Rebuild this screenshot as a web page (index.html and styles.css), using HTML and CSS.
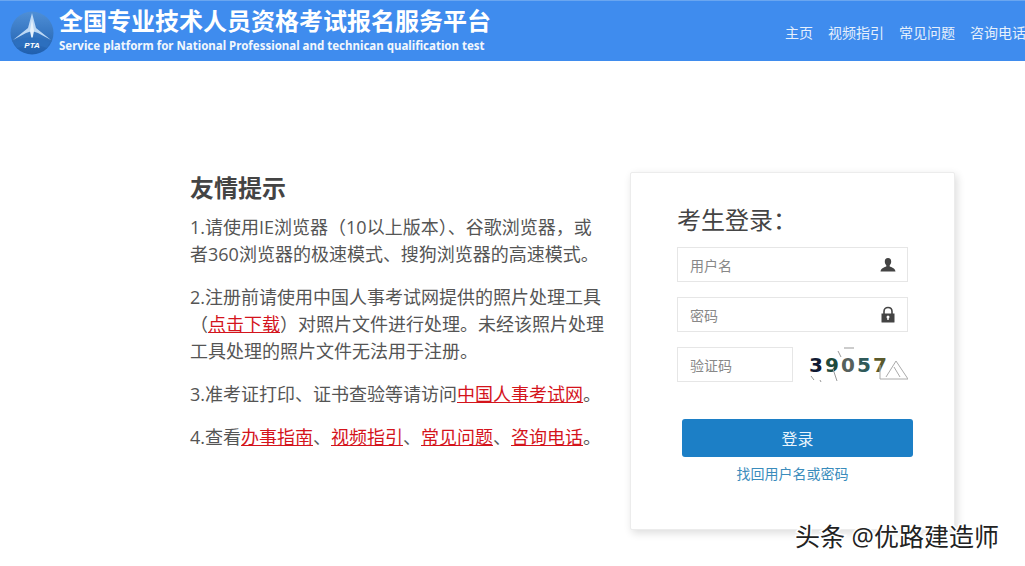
FILE: index.html
```html
<!DOCTYPE html>
<html lang="zh-CN">
<head>
<meta charset="utf-8">
<title>全国专业技术人员资格考试报名服务平台</title>
<link rel="stylesheet" href="styles.css">
</head>
<body>
<header class="topbar">
  <div class="brand">
    <svg class="logo" width="44" height="44" viewBox="0 0 44 44" aria-hidden="true">
      <defs>
        <linearGradient id="lg" x1="0" y1="0" x2="0" y2="1">
          <stop offset="0" stop-color="#4f8fd6"/>
          <stop offset="1" stop-color="#1f5fae"/>
        </linearGradient>
      </defs>
      <circle cx="22" cy="22" r="21.5" fill="url(#lg)"/>
      <path d="M22 2 L26 17 L41 29 L28 22 L22 20 L16 22 L3 29 L18 17 Z" fill="#bcd8f5"/>
      <path d="M22 8 L24 20 L22 30 L20 20 Z" fill="#e6f1fc"/>
      <path d="M4 31 Q22 22 40 31 L37 37 Q22 30 7 37 Z" fill="#2c6fbe"/>
      <text x="22" y="37" class="logo-text">PTA</text>
    </svg>
    <div class="brand-text">
      <div class="brand-cn">全国专业技术人员资格考试报名服务平台</div>
      <div class="brand-en">Service platform for National Professional and technican qualification test</div>
    </div>
  </div>
  <nav class="nav">
    <a>主页</a><a>视频指引</a><a>常见问题</a><a>咨询电话</a>
  </nav>
</header>
<main class="main">
  <section class="tips">
    <h2 class="tips-title">友情提示</h2>
    <p>1.请使用IE浏览器（10以上版本）、谷歌浏览器，或者360浏览器的极速模式、搜狗浏览器的高速模式。</p>
    <p>2.注册前请使用中国人事考试网提供的照片处理工具（<a class="red">点击下载</a>）对照片文件进行处理。未经该照片处理工具处理的照片文件无法用于注册。</p>
    <p>3.准考证打印、证书查验等请访问<a class="red">中国人事考试网</a>。</p>
    <p>4.查看<a class="red">办事指南</a>、<a class="red">视频指引</a>、<a class="red">常见问题</a>、<a class="red">咨询电话</a>。</p>
  </section>
  <section class="panel">
    <h3 class="panel-title">考生登录：</h3>
    <div class="field">
      <span class="ph">用户名</span>
      <svg width="16" height="16" viewBox="0 0 16 16" aria-hidden="true"><path d="M8 1c2.2 0 3.2 1.500 3.200 3.500 0 1.600-.7 3-1.500 3.800v1.300c1.600.7 5.300 1.500 5.800 4.900H.5c.5-3.400 4.200-4.200 5.800-4.900V8.300C5.500 7.500 4.800 6.100 4.800 4.500 4.800 2.500 5.800 1 8 1z" fill="#444"/></svg>
    </div>
    <div class="field">
      <span class="ph">密码</span>
      <svg width="16" height="17" viewBox="0 0 16 17" aria-hidden="true"><path d="M4 8V5.500C4 3 5.700 1.500 8 1.500S12 3 12 5.500V8" fill="none" stroke="#444" stroke-width="1.600"/><path d="M1.500 7.500h13v8.500a.5.5 0 0 1-.5.5H2a.5.500 0 0 1-.5-.5z" fill="#444"/><circle cx="8" cy="11" r="1.500" fill="#fff"/><rect x="7.300" y="11" width="1.400" height="3" fill="#fff"/></svg>
    </div>
    <div class="captcha-row">
      <div class="field field-short"><span class="ph">验证码</span></div>
      <div class="captcha">
        <span class="c1">3</span><span class="c2">9</span><span class="c3">0</span><span class="c4">5</span><span class="c5">7</span>
        <svg class="noise" width="100" height="36" viewBox="0 0 100 36" aria-hidden="true">
          <path d="M72 32 V18 M72 32 H100 L88 14 L78 30 M86 20 L92 30" fill="none" stroke="#aaa" stroke-width="1"/>
          <path d="M25 22 L29 34 M3 29 L6 33 M12 33 L13 35 M36 1 H46 M30 4 L33 10" fill="none" stroke="#999" stroke-width="1"/>
        </svg>
      </div>
    </div>
    <button class="login" type="button">登录</button>
    <a class="forgot">找回用户名或密码</a>
  </section>
</main>
<div class="watermark">头条 @优路建造师</div>
</body>
</html>
```
FILE: styles.css
```css
* { box-sizing: border-box; }
html, body { margin: 0; padding: 0; }
body {
  width: 1025px;
  height: 566px;
  overflow: hidden;
  position: relative;
  background: #fff;
  color: #555;
  font-family: "Open Sans", "Noto Sans CJK SC", sans-serif;
}
.topbar {
  height: 61px;
  background: #3f8cee;
  border-top: 1px solid #6aa6f0;
  display: flex;
  justify-content: space-between;
  align-items: center;
  white-space: nowrap;
}
.brand { display: flex; align-items: center; padding-left: 10px; gap: 5px; }
.logo { flex: none; margin-top: 4px; }
.logo-text { font: italic bold 8px "Liberation Sans", sans-serif; fill: #fff; text-anchor: middle; }
.brand-text { margin-top: -5px; }
.brand-cn { font-size: 24px; line-height: 32px; font-weight: 700; color: #fff; }
.brand-en { font: 700 11.5px/14px "Noto Sans", sans-serif; color: #f2f7fd; margin-top: 2px; }
.nav { display: flex; gap: 15px; margin-right: -15px; font-size: 14px; color: #e6f0fc; padding-top: 2px; flex: none; width: 255px; }
.nav a { flex: none; }
.main { display: flex; padding: 111px 0 0 190px; gap: 25px; align-items: flex-start; }
.tips { width: 415px; font-size: 18px; line-height: 27px; }
.tips-title { margin: 0 0 11px; padding-top: 1px; font-size: 24px; line-height: 30px; color: #444; font-weight: 700; }
.tips p { margin: 0 0 16px; }
.red { color: #d4141c; text-decoration: underline; }
.panel {
  width: 325px;
  height: 358px;
  border: 1px solid #ececec;
  box-shadow: 2px 3px 8px rgba(0,0,0,.14);
  padding: 30px 0 0 46px;
  background: #fff;
  border-radius: 2px;
}
.panel-title { margin: 0 0 11px; font-size: 24px; line-height: 33px; font-weight: 400; color: #444; }
.field {
  width: 231px;
  height: 35px;
  border: 1px solid #e6e6e6;
  margin-bottom: 15px;
  padding: 0 11px 0 12px;
  display: flex;
  align-items: center;
  justify-content: space-between;
  background: #fff;
}
.ph { font-size: 14px; color: #888; }
.captcha-row { display: flex; gap: 15px; align-items: flex-start; margin-bottom: 36px; }
.field-short { width: 116px; margin: 0; }
.captcha {
  position: relative;
  width: 100px;
  height: 36px;
  padding: 3px 0 0 1px;
  display: flex;
  gap: 3px;
  font: 700 22px/30px "DejaVu Sans", sans-serif;
  letter-spacing: 0;
  transform: none;
}
.captcha span { display: block; width: 13px; font-size: 20px; }
.c1 { color: #111a33; }
.c2 { color: #1e4a3c; }
.c3 { color: #55605c; }
.c4 { color: #2f5a5a; }
.c5 { color: #5a5a2c; }
.noise { position: absolute; left: 0; top: 0; }
.login {
  display: block;
  width: 231px;
  height: 38px;
  margin-left: 5px;
  border: 0;
  border-radius: 3px;
  background: #1c7fc6;
  color: #e8f4fc;
  font: 400 16px "Open Sans", "Noto Sans CJK SC", sans-serif;
}
.forgot { display: block; width: 231px; text-align: center; margin-top: 7px; font-size: 14px; line-height: 20px; color: #3a8cbc; }
.watermark {
  position: absolute;
  left: 795px;
  top: 519px;
  font-size: 25px;
  line-height: 34px;
  white-space: nowrap;
  color: #222;
  -webkit-text-stroke: 3px #fff;
  paint-order: stroke fill;
}
```
